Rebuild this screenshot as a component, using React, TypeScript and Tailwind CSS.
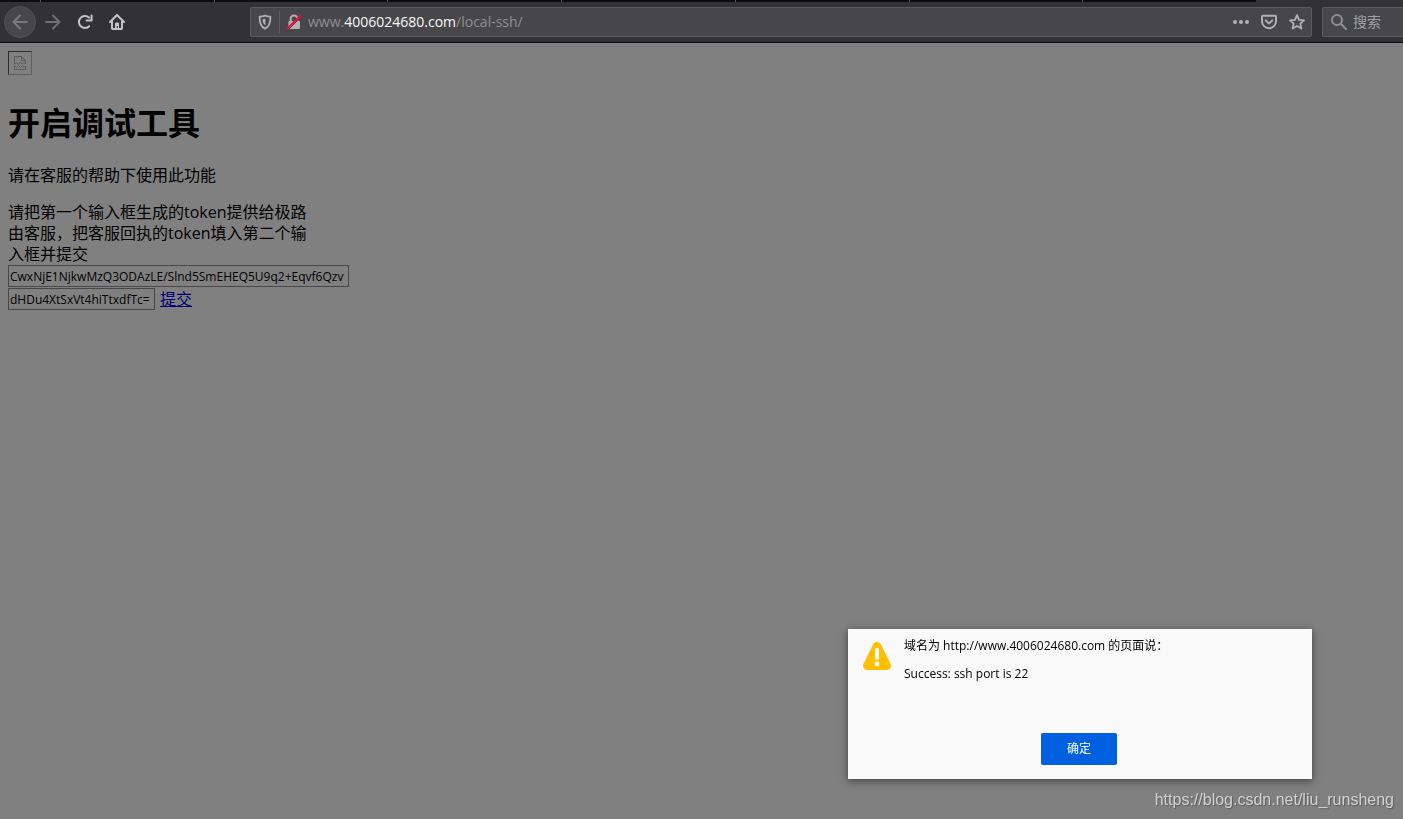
import React, { useState } from 'react';

const TABS = [0, 1, 2, 3, 4, 5];

function BackIcon({ flipped = false }: { flipped?: boolean }) {
  return (
    <svg viewBox="0 0 16 16" className={`w-4 h-4 ${flipped ? 'rotate-180' : ''}`} fill="none" stroke="currentColor" strokeWidth="2" strokeLinecap="round" strokeLinejoin="round">
      <path d="M15 8H1.5M8 1.5L1.5 8L8 14.5" />
    </svg>
  );
}

function ReloadIcon() {
  return (
    <svg viewBox="0 0 16 16" className="w-4 h-4" fill="none" stroke="currentColor" strokeWidth="2" strokeLinecap="round">
      <path d="M12.2 12.2A6 6 0 1 1 12 3.6" />
      <path d="M14.6 1.4V6.4H9.6" strokeLinejoin="round" />
    </svg>
  );
}

function HomeIcon() {
  return (
    <svg viewBox="0 0 16 16" className="w-4 h-4" fill="none" stroke="currentColor" strokeWidth="2" strokeLinecap="round" strokeLinejoin="round">
      <path d="M1 8L8 1L15 8" />
      <path d="M3 7.5V14.3Q3 15 3.7 15H12.3Q13 15 13 14.3V7.5" />
      <path d="M6 15V9.8Q6 8.5 7.2 8.5H8.8Q10 8.5 10 9.8V15H8.8V12H7.8V15Z" fill="currentColor" stroke="none" />
    </svg>
  );
}

function ShieldIcon() {
  return (
    <svg viewBox="0 0 16 16" className="w-4 h-4" fill="none" stroke="currentColor" strokeWidth="1.8" strokeLinejoin="round">
      <path d="M8 1.6C6 2.2 4 2.5 2.6 2.6C2.4 8.5 3.4 12.6 8 14.6C12.6 12.6 13.6 8.5 13.4 2.6C12 2.5 10 2.2 8 1.6Z" />
      <path d="M8.4 4.8V11.6C6.4 10 5.6 8 5.6 5.2Z" fill="currentColor" stroke="none" />
    </svg>
  );
}

function InsecureIcon() {
  return (
    <svg viewBox="0 0 16 16" className="w-4 h-4" fill="none">
      <path d="M4.6 7.5V4.8A3.4 3.4 0 0 1 11.4 4.8V7.5" stroke="#b1b1b3" strokeWidth="2" />
      <rect x="2.4" y="7" width="11.6" height="8" rx="1" fill="#b1b1b3" />
      <path d="M3 15L14 4" stroke="#474749" strokeWidth="1" />
      <path d="M1.4 14.6L14.2 1.8" stroke="#ff0039" strokeWidth="2" strokeLinecap="round" />
    </svg>
  );
}

function DotsIcon() {
  return (
    <svg viewBox="0 0 16 16" className="w-4 h-4" fill="currentColor">
      <circle cx="2" cy="8" r="2" />
      <circle cx="8" cy="8" r="2" />
      <circle cx="14" cy="8" r="2" />
    </svg>
  );
}

function PocketIcon() {
  return (
    <svg viewBox="0 0 16 16" className="w-4 h-4" fill="none" stroke="currentColor" strokeWidth="2" strokeLinecap="round" strokeLinejoin="round">
      <path d="M2 1.8H14Q15 1.8 15 2.8V7.2A7 7 0 0 1 1 7.2V2.8Q1 1.8 2 1.8Z" />
      <path d="M4.8 6.4L8 9.4L11.2 6.4" />
    </svg>
  );
}

function StarIcon() {
  return (
    <svg viewBox="0 0 16 16" className="w-4 h-4" fill="none" stroke="currentColor" strokeWidth="1.8" strokeLinejoin="round">
      <path d="M8 1.2L10 5.8L15 6.3L11.3 9.6L12.4 14.6L8 12L3.6 14.6L4.7 9.6L1 6.3L6 5.8Z" />
    </svg>
  );
}

function SearchIcon() {
  return (
    <svg viewBox="0 0 16 16" className="w-4 h-4" fill="none" stroke="currentColor" strokeWidth="2" strokeLinecap="round">
      <circle cx="6" cy="6" r="5" />
      <path d="M9.8 9.8L15 15" />
    </svg>
  );
}

function BrokenImage() {
  return (
    <div role="img" aria-label="logo" className="w-6 h-6 flex items-center justify-center border border-t-[#2d2d2d] border-l-[#2d2d2d] border-r-[#606060] border-b-[#606060]">
      <svg viewBox="0 0 14 14" className="w-3.5 h-3.5" fill="none" stroke="#5c5c5c" strokeWidth="1">
        <path d="M1.5 8V0.5H8.5L12.5 4.5V8M8.5 0.5V4.5H12.5" />
        <path d="M1.5 8L3.5 6.5L5.5 8L7.5 6.5L9.5 8L11 6.5L12.5 8" />
        <path d="M1.5 10V13.5H12.5V10L11 11.5L9.5 9.5L7.5 11.5L5.5 9.5L3.5 11.5Z" />
      </svg>
    </div>
  );
}

function WarningIcon() {
  return (
    <svg viewBox="0 0 28 28" className="w-7 h-7 shrink-0">
      <path d="M14 0C12.4 0 11.1 0.8 10.3 2.3L0.6 21.6C-0.9 24.7 0.9 28 4.2 28H23.8C27.1 28 28.9 24.7 27.4 21.6L17.7 2.3C16.9 0.8 15.6 0 14 0Z" fill="#ffbf00" />
      <path d="M14 7.8V16" stroke="#fff" strokeWidth="4" strokeLinecap="round" />
      <circle cx="14" cy="22" r="2.4" fill="#fff" />
    </svg>
  );
}

function Toolbar() {
  return (
    <header className="bg-[#323234] border-b border-[#0c0c0d] font-['Open_Sans','Noto_Sans_CJK_SC',sans-serif]">
      <div className="h-0.5 mr-[147px] bg-[#0c0c0d] flex">
        <div className="w-[41px] border-r border-[#5a5a5c]" />
        {TABS.map(i => (
          <div key={i} className="flex-1 border-r border-[#5a5a5c]" />
        ))}
        <div className="flex-1" />
      </div>

      <div className="h-10 pl-1 flex items-center">
        <nav className="flex items-center text-[#c4c4c5]">
          <button aria-label="后退" className="w-8 h-8 mr-px rounded-full bg-[#474749] border border-[#505052] text-[#79797b] flex items-center justify-center">
            <BackIcon />
          </button>
          <button aria-label="前进" className="w-8 h-8 text-[#717173] flex items-center justify-center">
            <BackIcon flipped />
          </button>
          <button aria-label="刷新" className="w-8 h-8 flex items-center justify-center">
            <ReloadIcon />
          </button>
          <button aria-label="主页" className="w-8 h-8 flex items-center justify-center">
            <HomeIcon />
          </button>
        </nav>

        <div className="flex-1 min-w-0 h-[30px] ml-[117px] mr-2.5 px-1.5 flex items-center bg-[#474749] border border-[#5a5a5c] rounded-xs text-[#b1b1b3]">
          <button aria-label="跟踪保护" className="pr-1.5"><ShieldIcon /></button>
          <div className="w-px h-[22px] bg-[#606062]" />
          <button aria-label="连接不安全" className="px-1.5"><InsecureIcon /></button>
          <div role="textbox" aria-label="地址" className="flex-1 min-w-0 truncate text-sm leading-5 text-[#8f8f91]">
            www.<span className="text-[#f9f9fa]">4006024680.com</span>/local-ssh/
          </div>
          <div className="flex gap-3">
            <button aria-label="页面操作"><DotsIcon /></button>
            <button aria-label="Pocket"><PocketIcon /></button>
            <button aria-label="书签"><StarIcon /></button>
          </div>
        </div>

        <label className="w-[81px] h-[30px] pl-2 flex items-center gap-1.5 bg-[#474749] border border-r-0 border-[#5a5a5c] rounded-l-xs text-[#8f8f91]">
          <span className="shrink-0"><SearchIcon /></span>
          <input type="text" aria-label="搜索" placeholder="搜索" className="w-full min-w-0 bg-transparent outline-none text-sm leading-5 placeholder:text-[#a0a0a2]" />
        </label>
      </div>
    </header>
  );
}

export default function App() {
  const [request, setRequest] = useState('CwxNjE1NjkwMzQ3ODAzLE/Slnd5SmEHEQ5U9q2+Eqvf6Qzv');
  const [receipt, setReceipt] = useState('dHDu4XtSxVt4hiTtxdfTc=');
  const [open, setOpen] = useState(true);

  return (
    <div className="min-h-screen bg-[#808080] text-black font-['Open_Sans','Noto_Sans_CJK_SC',sans-serif]">
      <Toolbar />

      <main className="p-2">
        <BrokenImage />
        <h1 className="mt-6 text-[32px] leading-[48px] font-bold">开启调试工具</h1>
        <p className="mt-[18px] text-base leading-[21px]">请在客服的帮助下使用此功能</p>
        <p className="mt-4 w-[304px] text-base leading-[21px]">
          请把第一个输入框生成的token提供给极路由客服，把客服回执的token填入第二个输入框并提交
        </p>
        <input
          type="text"
          aria-label="token"
          value={request}
          onChange={e => setRequest(e.target.value)}
          className="block w-[341px] h-[22px] px-px border border-[#484848] bg-transparent text-xs outline-none"
        />
        <div className="mt-px flex items-center gap-[5px]">
          <input
            type="text"
            aria-label="回执 token"
            value={receipt}
            onChange={e => setReceipt(e.target.value)}
            className="w-[147px] h-[22px] px-px border border-[#484848] bg-transparent text-xs outline-none"
          />
          <a href="#" className="text-base leading-[21px] underline text-[#000077]">提交</a>
        </div>
      </main>

      {open && (
        <div role="alertdialog" aria-labelledby="alert-title" className="fixed right-[91px] bottom-10 w-[464px] pl-3.5 pr-4 pt-2 pb-3.5 bg-[#f9f9fa] shadow-[0_2px_8px_rgba(0,0,0,0.5)] text-xs leading-[18px]">
          <div className="flex gap-[13px]">
            <div className="pt-[5px] pl-px"><WarningIcon /></div>
            <div>
              <p id="alert-title">域名为 http://www.4006024680.com 的页面说：</p>
              <p className="mt-2.5">Success: ssh port is 22</p>
            </div>
          </div>
          <button onClick={() => setOpen(false)} className="block w-19 h-8 mx-auto mt-[50px] rounded-xs bg-[#0060df] text-white">
            确定
          </button>
        </div>
      )}

      <div className="fixed right-[9px] bottom-2 text-base leading-[22px] text-[#d2d2d2] font-['Liberation_Sans',sans-serif] [text-shadow:1px_1px_1px_rgba(0,0,0,0.3)]">
        https://blog.csdn.net/liu_runsheng
      </div>
    </div>
  );
}
